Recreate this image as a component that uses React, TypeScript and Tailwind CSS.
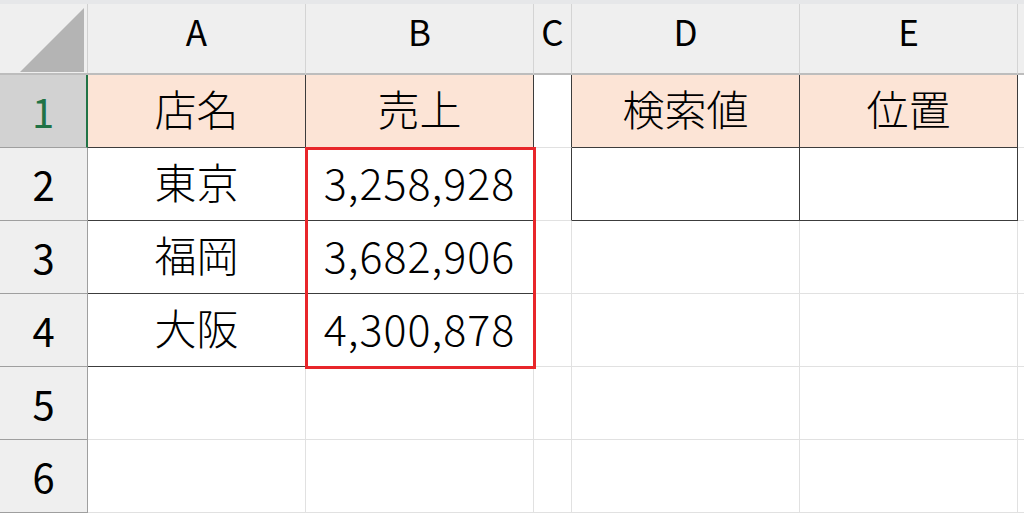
import React from "react";

const font = { fontFamily: '"Noto Sans CJK JP", "Noto Sans", sans-serif' };

type Cell = {
  text?: string;
  fill?: boolean;
  num?: boolean;
};

const rows: Cell[][] = [
  [
    { text: "店名", fill: true },
    { text: "売上", fill: true },
    {},
    { text: "検索値", fill: true },
    { text: "位置", fill: true },
  ],
  [{ text: "東京" }, { text: "3,258,928", num: true }, {}, {}, {}],
  [{ text: "福岡" }, { text: "3,682,906", num: true }, {}, {}, {}],
  [{ text: "大阪" }, { text: "4,300,878", num: true }, {}, {}, {}],
  [{}, {}, {}, {}, {}],
  [{}, {}, {}, {}, {}],
];

const letters = ["A", "B", "C", "D", "E"];

function Corner() {
  return (
    <div className="flex h-full items-start border-r border-[#d0d0d0] bg-[#efefef]">
      <svg width="87" height="71" viewBox="0 0 87 71">
        <polygon points="20,68 84,4 84,68" fill="#b4b4b4" />
      </svg>
    </div>
  );
}

// which cells get a dark right / bottom edge (table borders in A1:B4 and D1:E2)
function edges(i: number, j: number) {
  const inLeft = j <= 1 && i <= 3;
  const inRight = j >= 3 && i <= 1;
  const right = inLeft || inRight || (j === 2 && i <= 1);
  const bottom = inLeft || inRight;
  return { right, bottom };
}

export default function App() {
  return (
    <div
      className="relative h-[515px] w-[1024px] overflow-hidden bg-white font-light text-black"
      style={font}
    >
      <div className="h-1 bg-[#e6e7e9]" />
      <div className="grid grid-cols-[88px_218px_228px_38px_228px_218px_1fr] grid-rows-[71px_73px_73px_73px_73px_73px_73px]">
        {/* header row */}
        <div className="border-b-2 border-[#bdbdbd]">
          <Corner />
        </div>
        {letters.map((l) => (
          <div
            key={l}
            className="flex items-center justify-center border-r border-b-2 border-r-[#d4d4d4] border-b-[#bdbdbd] bg-[#efefef] pb-4 text-[35px] font-normal leading-none"
          >
            {l}
          </div>
        ))}
        <div className="border-b-2 border-[#bdbdbd] bg-[#efefef]" />

        {rows.map((r, i) => (
          <React.Fragment key={i}>
            <div
              className={
                i === 0
                  ? "flex items-center justify-center border-r-2 border-b border-r-[#217346] border-b-[#9f9f9f] bg-[#d2d2d2] text-[40px] font-normal leading-none text-[#217346]"
                  : "flex items-center justify-center border-r border-b border-[#9f9f9f] bg-[#efefef] text-[40px] font-normal leading-none"
              }
            >
              {i + 1}
            </div>
            {r.map((c, j) => {
              const e = edges(i, j);
              return (
                <div
                  key={j}
                  className={[
                    "flex items-center justify-center border-r border-b pb-1.5",
                    e.right ? "border-r-[#3c3c3c]" : "border-r-[#e1e1e1]",
                    e.bottom ? "border-b-[#3c3c3c]" : "border-b-[#e1e1e1]",
                    c.fill ? "bg-[#fce4d6]" : "bg-white",
                    c.num
                      ? "text-[43px] tracking-[1px] leading-none"
                      : "text-[42px] leading-none",
                  ].join(" ")}
                >
                  {c.text}
                </div>
              );
            })}
            <div className="border-b border-[#e1e1e1]" />
          </React.Fragment>
        ))}
      </div>
      {/* red selection box around B2:B4 */}
      <div className="pointer-events-none absolute left-[305px] top-[147px] h-[222px] w-[231px] border-[3px] border-[#e8262a]" />
    </div>
  );
}
